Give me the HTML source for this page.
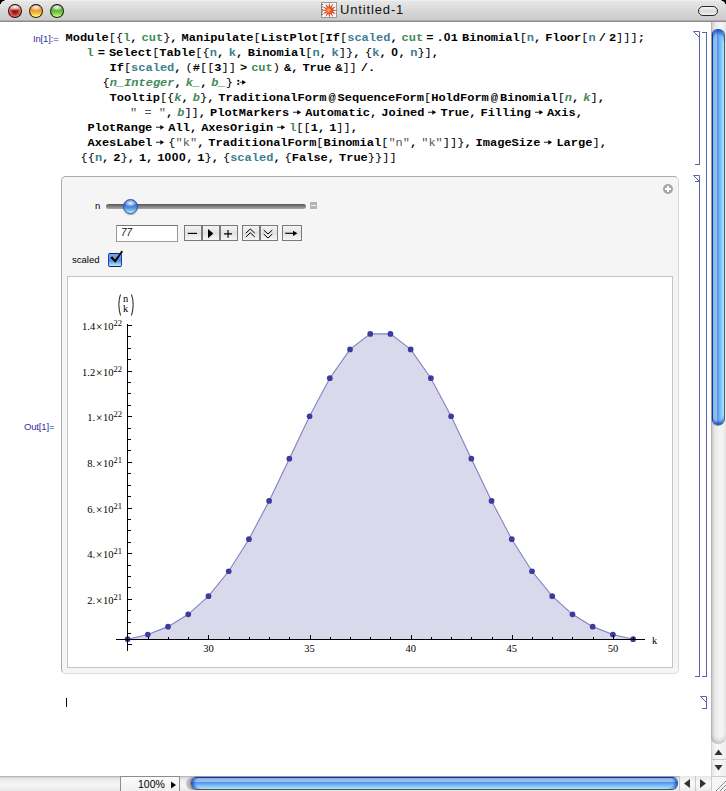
<!DOCTYPE html>
<html><head><meta charset="utf-8">
<style>
*{margin:0;padding:0;box-sizing:border-box}
html,body{width:726px;height:791px;overflow:hidden;background:#fff}
body{position:relative;font-family:"Liberation Sans",sans-serif}
.abs{position:absolute}
#title{left:0;top:0;width:726px;height:22px;background:linear-gradient(#f6f6f6 0,#e7e7e7 1px,#d9d9d9 10px,#cbcbcb 20px,#8c8c8c 21px,#8c8c8c 22px)}
.tl{position:absolute;top:4px;width:14px;height:14px;border-radius:50%}
#ttext{left:340px;top:2px;font-size:13px;letter-spacing:0.85px;color:#111;white-space:nowrap}
.code{position:absolute;white-space:pre;transform:scaleY(0.84);transform-origin:0 10.5px;font-family:"Liberation Mono",monospace;font-weight:bold;font-size:12px;line-height:15px;color:#000}
.b{font-weight:normal}
.g{color:#438958;font-style:normal}
.t{color:#3c7d91;font-style:normal}
.i{font-style:italic;color:#438958}
.z{font-style:normal;line-height:0;font-family:"Liberation Sans",sans-serif;font-size:12px;letter-spacing:0.53px}
.s{color:#555;font-weight:normal;font-style:normal}
.lbl{position:absolute;font-size:9.5px;color:#3030a0;white-space:nowrap;letter-spacing:-0.15px}
.br{position:absolute;background:#5a64a8}
.ar{vertical-align:0.7px}
u{display:inline-block;text-decoration:none}

#title{border-radius:0}
#panel{left:61px;top:176px;width:618px;height:498px;background:#f5f5f5;border:1px solid #ababab;border-right-color:#d9d9d9;border-bottom-color:#dcdcdc;border-radius:5px}
#frame{left:67px;top:276px;width:606px;height:392px;background:#fff;border:1px solid #c4c4c4}
#track{left:106px;top:204px;width:200px;height:5px;border-radius:3px;background:linear-gradient(#555 0,#8a8a8a 60%,#a8a8a8 100%)}
#knob{left:123px;top:199px;width:15px;height:15px;border-radius:50%;border:1px solid #2a4aa8;background:radial-gradient(ellipse 45% 28% at 50% 25%,rgba(255,255,255,.95) 0,rgba(255,255,255,.3) 70%,rgba(255,255,255,0) 100%),linear-gradient(#4a88e0 0,#3a78d8 45%,#6ab0f0 75%,#c8f8ff 100%);box-shadow:0 1px 1px rgba(0,0,0,.35)}
#minbox{left:310px;top:202px;width:7px;height:7px;background:#b4b4b4}
#minbox:after{content:"";position:absolute;left:1px;top:3px;width:5px;height:1px;background:#eee}
#field{left:116px;top:225px;width:62px;height:17px;background:#fff;border:1px solid #9a9a9a;border-top-color:#777;font-size:10px;font-style:italic;padding:1px 0 0 4px;color:#111}
.btn{top:225px;height:16px;border:1px solid #7a7a7a;background:linear-gradient(#f4f4f4,#e2e2e2 50%,#f6f6f6);padding:1px 0 0 0}
.btn svg{display:block}
#cbox{left:108px;top:253px;width:14px;height:14px;border-radius:2px;border:1px solid #1a40c0;border-top-color:#0a1a88;border-bottom-color:#142060;background:linear-gradient(#7aa8e8 0,#5a94e0 40%,#4a88dc 50%,#80c4f8 80%,#b8f0ff 100%)}
#plus{left:663px;top:184px;width:10px;height:10px;margin-top:-4px}
.serif{font-family:"Liberation Serif",serif;font-size:10.5px;color:#000;white-space:nowrap;line-height:1}
.ylab{position:absolute;left:60px;width:62px;text-align:right;font-family:"Liberation Serif",serif;font-size:10.5px;line-height:15px;white-space:nowrap;color:#000}
.ylab sup{font-size:8.5px;vertical-align:4px;line-height:0}
.tx{font-size:12px;margin:0 0.5px;line-height:0;vertical-align:-1px}
.xlab{position:absolute;top:643.5px;width:30px;text-align:center;font-family:"Liberation Serif",serif;font-size:10.5px;line-height:10px;color:#000}
#vbg{left:711px;top:22px;width:15px;height:754px;background:linear-gradient(90deg,#bdbdbd 0,#e6e6e6 1px,#f8f8f8 6px,#efefef 15px)}
#vtrack{left:711px;top:22px;width:15px;height:722px;border-radius:0 0 7px 7px;background:linear-gradient(90deg,#a9a9a9 0,#d0d0d0 1px,#e8e8e8 4px,#f4f4f4 9px,#f0f0f0 15px);box-shadow:inset 0 -4px 4px -1px rgba(0,0,0,.18)}
#vthumb{left:712px;top:28.5px;width:12px;height:396.5px;border-radius:6px;background:linear-gradient(90deg,#0038c0 0,#0038c0 1px,#8cb4e6 1px,#9cc2ea 5px,#4a8ae0 5px,#5aa0f0 6px,#a8e8ff 12px);box-shadow:1px 0 0 #5a5a5a,-1px 0 0 rgba(150,140,130,.7),0 1px 0 rgba(90,80,70,.6)}

#vup{left:711px;top:744px;width:15px;height:16px;border-bottom:1px solid #c8c8c8}
#vdown{left:711px;top:760px;width:15px;height:16px}
#vup svg,#vdown svg{display:block}
#hbar{left:0;top:776px;width:711px;height:15px;background:linear-gradient(#c8c8c8 0,#e2e2e2 1px,#efefef 4px,#f5f5f5 9px,#e4e4e4 15px);border-top:1px solid #b9b9b9}
#zoombox{left:120px;top:776px;width:60px;height:15px;background:linear-gradient(#fcfcfc,#f0f0f0);border:1px solid #8d8d8d;border-bottom:none;font-size:10.5px;line-height:14px;padding-left:17px;color:#000}
#vthumb:before{content:"";position:absolute;left:0;top:0;width:12px;height:12px;border-radius:6px 6px 0 0;background:radial-gradient(ellipse 80% 100% at 50% 100%,rgba(40,110,220,0) 45%,rgba(0,50,190,.85) 100%)}
#vthumb:after{content:"";position:absolute;left:0;bottom:0;width:12px;height:10px;border-radius:0 0 6px 6px;background:radial-gradient(ellipse 80% 100% at 50% 0%,rgba(40,110,220,0) 50%,rgba(0,50,190,.85) 100%)}
#hthumb:before{content:"";position:absolute;left:0;top:0;width:10px;height:12px;border-radius:6px 0 0 6px;background:radial-gradient(ellipse 100% 80% at 100% 50%,rgba(40,110,220,0) 50%,rgba(0,50,190,.8) 100%)}
#hthumb:after{content:"";position:absolute;right:0;top:0;width:10px;height:12px;border-radius:0 6px 6px 0;background:radial-gradient(ellipse 100% 80% at 0% 50%,rgba(40,110,220,0) 50%,rgba(0,50,190,.8) 100%)}
#hcres{left:186px;top:777px;width:16px;height:13px;border-radius:7px 0 0 7px;background:linear-gradient(90deg,#c8c8c8,#a8a8a8 40%,#d8d8d8)}
#hthumb{left:191px;top:777px;width:487px;height:12px;border-radius:6px;background:linear-gradient(#0a32b0 0,#0a32b0 1px,#88b2e6 1px,#9ec4ea 5px,#4a88dc 5px,#5a9cf0 6px,#a8e8ff 12px);box-shadow:0 1px 0 #5a5048,0 -1px 0 rgba(150,130,110,.5),-1px 0 1px rgba(0,0,0,.3)}
#hleft{left:679px;top:776px;width:16px;height:15px;border-left:1px solid #c8c8c8;background:linear-gradient(#e8e8e8,#fafafa 50%,#ececec)}
#hright{left:695px;top:776px;width:16px;height:15px;border-left:1px solid #c8c8c8;background:linear-gradient(#e8e8e8,#fafafa 50%,#ececec)}
#hleft svg,#hright svg{display:block}
#grip{left:711px;top:776px;width:15px;height:15px;background:#f6f6f6;border-top:1px solid #ccc;border-left:1px solid #ccc}
#grip svg{display:block}
#pill{left:698px;top:6px;width:20px;height:10px;border-radius:5px;border:1px solid #2a2a2a;background:linear-gradient(#f8f8f8,#d8d8d8 50%,#f0f0f0)}
#ticon{left:320px;top:2px;width:17px;height:16px}
#ticon svg{display:block}
</style></head><body>
<div id="title" class="abs"></div>
<svg class="abs" style="left:0;top:0" width="726" height="5" shape-rendering="crispEdges"><path d="M0 0H4V1H2V2H1V4H0Z" fill="#000"/><path d="M726 0H722V1H724V2H725V4H726Z" fill="#000"/><path d="M4 0H5V1H4ZM2 1H3V2H2ZM1 2H2V3H1Z" fill="#888"/><path d="M721 0H722V1H721ZM723 1H724V2H723ZM724 2H725V3H724Z" fill="#888"/></svg>
<div class="tl" style="left:8px;border:1px solid #2a0a08;border-top-color:#111;background:radial-gradient(ellipse 55% 30% at 50% 18%,rgba(255,255,255,.95) 0,rgba(255,255,255,.5) 60%,rgba(255,255,255,0) 100%),radial-gradient(circle at 50% 52%,#8a0e08 0,#9a1810 22%,#d85a50 55%,#f08a80 78%,#c8403a 100%)"></div>
<div class="tl" style="left:29px;border:1px solid #3a2008;border-top-color:#111;background:radial-gradient(ellipse 55% 30% at 50% 18%,rgba(255,255,255,.95) 0,rgba(255,255,255,.5) 60%,rgba(255,255,255,0) 100%),linear-gradient(#c85a08 0,#e88a18 35%,#f8c040 70%,#ffff90 100%)"></div>
<div class="tl" style="left:50px;border:1px solid #0a2a08;border-top-color:#111;background:radial-gradient(ellipse 55% 30% at 50% 18%,rgba(255,255,255,.95) 0,rgba(255,255,255,.5) 60%,rgba(255,255,255,0) 100%),linear-gradient(#2a7a10 0,#50a828 35%,#88d050 70%,#c8ff98 100%)"></div>
<div id="ttext" class="abs">Untitled-1</div>


<div class="lbl" style="left:33px;top:33px">In[1]:=</div>
<div class="code" style="left:65.50px;top:31px">Module<b class="b">[{</b><i class="g">l</i>,<u style="width:4.00px"></u><i class="g">cut</i><b class="b">}</b>,<u style="width:4.00px"></u>Manipulate<b class="b">[</b>ListPlot<b class="b">[</b>If<b class="b">[</b><i class="t">scaled</i>,<u style="width:4.00px"></u><i class="g">cut</i><u style="width:3.00px"></u>=<u style="width:3.00px"></u>.<i class="z">0</i>1<u style="width:4.00px"></u>Binomial<b class="b">[</b><i class="t">n</i>,<u style="width:4.00px"></u>Floor<b class="b">[</b><i class="t">n</i><u style="width:3.00px"></u>/<u style="width:3.00px"></u>2<b class="b">]]]</b>;</div>
<div class="code" style="left:86.50px;top:46px"><i class="g">l</i><u style="width:4.00px"></u>=<u style="width:4.00px"></u>Select<b class="b">[</b>Table<b class="b">[{</b><i class="t">n</i>,<u style="width:4.60px"></u><i class="t">k</i>,<u style="width:4.60px"></u>Binomial<b class="b">[</b><i class="t">n</i>,<u style="width:4.60px"></u><i class="t">k</i><b class="b">]}</b>,<u style="width:4.60px"></u><b class="b">{</b><i class="t">k</i>,<u style="width:4.60px"></u><i class="z">0</i>,<u style="width:4.60px"></u><i class="t">n</i><b class="b">}]</b>,</div>
<div class="code" style="left:109.50px;top:61px">If<b class="b">[</b><i class="t">scaled</i>,<u style="width:4.00px"></u><b class="b">(</b>#<b class="b">[[</b>3<b class="b">]]</b><u style="width:4.00px"></u>&gt;<u style="width:4.00px"></u><i class="g">cut</i><b class="b">)</b><u style="width:4.00px"></u>&amp;,<u style="width:4.00px"></u>True<u style="width:4.00px"></u>&amp;<b class="b">]]</b><u style="width:4.00px"></u>/.</div>
<div class="code" style="left:102.50px;top:76px"><b class="b">{</b><i class="i">n_Integer</i>,<u style="width:4.00px"></u><i class="i">k_</i>,<u style="width:4.00px"></u><i class="i">b_</i><b class="b">}</b><u style="width:4.00px"></u><svg class="ar" width="10" height="7" viewBox="0 0 10 7"><circle cx="1.3" cy="1.6" r="1.1"/><circle cx="1.3" cy="5.4" r="1.1"/><path d="M2.6 3.5H6.2" stroke="#444" stroke-width="1.3"/><path d="M5.2 0.7L9 3.5L5.2 6.3Z" fill="#000"/></svg></div>
<div class="code" style="left:109.50px;top:91px">Tooltip<b class="b">[{</b><i class="i">k</i>,<u style="width:4.00px"></u><i class="i">b</i><b class="b">}</b>,<u style="width:4.00px"></u>TraditionalForm<u style="width:2.00px"></u>@<u style="width:2.00px"></u>SequenceForm<b class="b">[</b>HoldForm<u style="width:2.00px"></u>@<u style="width:2.00px"></u>Binomial<b class="b">[</b><i class="i">n</i>,<u style="width:4.00px"></u><i class="i">k</i><b class="b">]</b>,</div>
<div class="code" style="left:130.00px;top:106px"><i class="s">"<u style="width:7.2px"></u>=<u style="width:7.2px"></u>"</i>,<u style="width:4.00px"></u><i class="i">b</i><b class="b">]]</b>,<u style="width:4.00px"></u>PlotMarkers<svg class="ar" width="16" height="7" viewBox="0 0 16 7"><path d="M4 3.5H9.5" stroke="#222" stroke-width="1.3"/><path d="M8.3 0.7L12.2 3.5L8.3 6.3Z" fill="#000"/></svg>Automatic,<u style="width:4.00px"></u>Joined<svg class="ar" width="16" height="7" viewBox="0 0 16 7"><path d="M4 3.5H9.5" stroke="#222" stroke-width="1.3"/><path d="M8.3 0.7L12.2 3.5L8.3 6.3Z" fill="#000"/></svg>True,<u style="width:4.00px"></u>Filling<svg class="ar" width="16" height="7" viewBox="0 0 16 7"><path d="M4 3.5H9.5" stroke="#222" stroke-width="1.3"/><path d="M8.3 0.7L12.2 3.5L8.3 6.3Z" fill="#000"/></svg>Axis,</div>
<div class="code" style="left:87.50px;top:121px">PlotRange<svg class="ar" width="16" height="7" viewBox="0 0 16 7"><path d="M4 3.5H9.5" stroke="#222" stroke-width="1.3"/><path d="M8.3 0.7L12.2 3.5L8.3 6.3Z" fill="#000"/></svg>All,<u style="width:4.00px"></u>AxesOrigin<svg class="ar" width="16" height="7" viewBox="0 0 16 7"><path d="M4 3.5H9.5" stroke="#222" stroke-width="1.3"/><path d="M8.3 0.7L12.2 3.5L8.3 6.3Z" fill="#000"/></svg><i class="g">l</i><b class="b">[[</b>1,<u style="width:4.00px"></u>1<b class="b">]]</b>,</div>
<div class="code" style="left:87.50px;top:136px">AxesLabel<svg class="ar" width="16" height="7" viewBox="0 0 16 7"><path d="M4 3.5H9.5" stroke="#222" stroke-width="1.3"/><path d="M8.3 0.7L12.2 3.5L8.3 6.3Z" fill="#000"/></svg><b class="b">{</b><i class="s">"k"</i>,<u style="width:4.00px"></u>TraditionalForm<b class="b">[</b>Binomial<b class="b">[</b><i class="s">"n"</i>,<u style="width:4.00px"></u><i class="s">"k"</i><b class="b">]]}</b>,<u style="width:4.00px"></u>ImageSize<svg class="ar" width="16" height="7" viewBox="0 0 16 7"><path d="M4 3.5H9.5" stroke="#222" stroke-width="1.3"/><path d="M8.3 0.7L12.2 3.5L8.3 6.3Z" fill="#000"/></svg>Large<b class="b">]</b>,</div>
<div class="code" style="left:80.50px;top:151px"><b class="b">{{</b><i class="t">n</i>,<u style="width:4.00px"></u>2<b class="b">}</b>,<u style="width:4.00px"></u>1,<u style="width:4.00px"></u>1<i class="z">000</i>,<u style="width:4.00px"></u>1<b class="b">}</b>,<u style="width:4.00px"></u><b class="b">{</b><i class="t">scaled</i>,<u style="width:4.00px"></u><b class="b">{</b>False,<u style="width:4.00px"></u>True<b class="b">}}]]</b></div>


<div class="lbl" style="left:24px;top:421px">Out[1]=</div>
<!-- panel -->
<div class="abs" id="panel"></div>
<div class="abs" id="frame"></div>
<div class="abs" style="left:95px;top:200px;font-size:9.5px;color:#000">n</div>
<div class="abs" id="track"></div>
<div class="abs" id="knob"></div>
<div class="abs" id="minbox"></div>
<div class="abs" id="field">77</div>
<div class="abs btn" style="left:184px;width:18px"><svg width="16" height="14"><path d="M2.8 6.4H12" stroke="#000" stroke-width="1.15"/></svg></div>
<div class="abs btn" style="left:202px;width:18px"><svg width="16" height="14"><path d="M5 2L10.4 6.6L5 11.2Z" fill="#000"/></svg></div>
<div class="abs btn" style="left:220px;width:18px"><svg width="16" height="14"><path d="M3.1 6.8H11M7.05 2.9V10.7" stroke="#000" stroke-width="1.15"/></svg></div>
<div class="abs btn" style="left:242px;width:18px"><svg width="16" height="14"><path d="M2.8 6.2L7.3 2L11.8 6.2M2.8 10L7.3 5.8L11.8 10" stroke="#000" stroke-width="1" fill="none"/></svg></div>
<div class="abs btn" style="left:260px;width:18px"><svg width="16" height="14"><path d="M2.7 3L7 7L11.3 3M2.7 7L7 11L11.3 7" stroke="#000" stroke-width="1" fill="none"/></svg></div>
<div class="abs btn" style="left:282px;width:20px"><svg width="18" height="14"><path d="M2.2 6.3H11" stroke="#000" stroke-width="1.15"/><path d="M10 3.7L14.4 6.3L10 8.9Z" fill="#000"/></svg></div>
<div class="abs" style="left:72px;top:254px;font-size:9.5px;color:#000">scaled</div>
<div class="abs" id="cbox"></div>
<svg class="abs" style="left:108px;top:249px" width="18" height="16"><path d="M1.9 8.6L4.3 6.9L6.9 10.3L13.5 1.4L15.2 2.7L7.3 14.2Z" fill="#000" stroke="rgba(255,255,255,.6)" stroke-width="0.5"/></svg>
<div class="abs" id="plus"><svg width="10" height="10"><circle cx="5" cy="5" r="5" fill="#a6a6a6"/><path d="M5 2V8M2 5H8" stroke="#fff" stroke-width="2"/></svg></div>
<svg class="abs" style="left:0;top:0" width="726" height="791" viewBox="0 0 726 791">
<path d="M127.60 639.50 L127.60 639.20 L147.82 634.49 L168.04 626.63 L188.26 614.31 L208.48 596.19 L228.70 571.26 L248.92 539.22 L269.14 500.94 L289.36 458.71 L309.58 416.25 L329.80 378.21 L350.02 349.42 L370.24 333.89 L390.46 333.89 L410.68 349.42 L430.90 378.21 L451.12 416.25 L471.34 458.71 L491.56 500.94 L511.78 539.22 L532.00 571.26 L552.22 596.19 L572.44 614.31 L592.66 626.63 L612.88 634.49 L633.10 639.20 L633.10 639.50 Z" fill="#d9d9eb"/>
<path d="M127.60 639.20 L147.82 634.49 L168.04 626.63 L188.26 614.31 L208.48 596.19 L228.70 571.26 L248.92 539.22 L269.14 500.94 L289.36 458.71 L309.58 416.25 L329.80 378.21 L350.02 349.42 L370.24 333.89 L390.46 333.89 L410.68 349.42 L430.90 378.21 L451.12 416.25 L471.34 458.71 L491.56 500.94 L511.78 539.22 L532.00 571.26 L552.22 596.19 L572.44 614.31 L592.66 626.63 L612.88 634.49 L633.10 639.20" fill="none" stroke="#8080c6" stroke-width="1.1"/>
<circle cx="127.60" cy="639.20" r="2.85" fill="#3c3ca0"/>
<circle cx="147.82" cy="634.49" r="2.85" fill="#3c3ca0"/>
<circle cx="168.04" cy="626.63" r="2.85" fill="#3c3ca0"/>
<circle cx="188.26" cy="614.31" r="2.85" fill="#3c3ca0"/>
<circle cx="208.48" cy="596.19" r="2.85" fill="#3c3ca0"/>
<circle cx="228.70" cy="571.26" r="2.85" fill="#3c3ca0"/>
<circle cx="248.92" cy="539.22" r="2.85" fill="#3c3ca0"/>
<circle cx="269.14" cy="500.94" r="2.85" fill="#3c3ca0"/>
<circle cx="289.36" cy="458.71" r="2.85" fill="#3c3ca0"/>
<circle cx="309.58" cy="416.25" r="2.85" fill="#3c3ca0"/>
<circle cx="329.80" cy="378.21" r="2.85" fill="#3c3ca0"/>
<circle cx="350.02" cy="349.42" r="2.85" fill="#3c3ca0"/>
<circle cx="370.24" cy="333.89" r="2.85" fill="#3c3ca0"/>
<circle cx="390.46" cy="333.89" r="2.85" fill="#3c3ca0"/>
<circle cx="410.68" cy="349.42" r="2.85" fill="#3c3ca0"/>
<circle cx="430.90" cy="378.21" r="2.85" fill="#3c3ca0"/>
<circle cx="451.12" cy="416.25" r="2.85" fill="#3c3ca0"/>
<circle cx="471.34" cy="458.71" r="2.85" fill="#3c3ca0"/>
<circle cx="491.56" cy="500.94" r="2.85" fill="#3c3ca0"/>
<circle cx="511.78" cy="539.22" r="2.85" fill="#3c3ca0"/>
<circle cx="532.00" cy="571.26" r="2.85" fill="#3c3ca0"/>
<circle cx="552.22" cy="596.19" r="2.85" fill="#3c3ca0"/>
<circle cx="572.44" cy="614.31" r="2.85" fill="#3c3ca0"/>
<circle cx="592.66" cy="626.63" r="2.85" fill="#3c3ca0"/>
<circle cx="612.88" cy="634.49" r="2.85" fill="#3c3ca0"/>
<circle cx="633.10" cy="639.20" r="2.85" fill="#3c3ca0"/>
<g shape-rendering="crispEdges" stroke="#000" stroke-width="1">
<line x1="116" y1="639.5" x2="645" y2="639.5"/>
<line x1="127.5" y1="324" x2="127.5" y2="651"/>
<line x1="127.5" y1="644.5" x2="132.0" y2="644.5"/>
<line x1="127.5" y1="633.5" x2="130.5" y2="633.5"/>
<line x1="127.5" y1="622.5" x2="130.5" y2="622.5"/>
<line x1="127.5" y1="610.5" x2="130.5" y2="610.5"/>
<line x1="127.5" y1="599.5" x2="132.0" y2="599.5"/>
<line x1="127.5" y1="587.5" x2="130.5" y2="587.5"/>
<line x1="127.5" y1="576.5" x2="130.5" y2="576.5"/>
<line x1="127.5" y1="565.5" x2="130.5" y2="565.5"/>
<line x1="127.5" y1="553.5" x2="132.0" y2="553.5"/>
<line x1="127.5" y1="542.5" x2="130.5" y2="542.5"/>
<line x1="127.5" y1="530.5" x2="130.5" y2="530.5"/>
<line x1="127.5" y1="519.5" x2="130.5" y2="519.5"/>
<line x1="127.5" y1="508.5" x2="132.0" y2="508.5"/>
<line x1="127.5" y1="496.5" x2="130.5" y2="496.5"/>
<line x1="127.5" y1="485.5" x2="130.5" y2="485.5"/>
<line x1="127.5" y1="473.5" x2="130.5" y2="473.5"/>
<line x1="127.5" y1="462.5" x2="132.0" y2="462.5"/>
<line x1="127.5" y1="450.5" x2="130.5" y2="450.5"/>
<line x1="127.5" y1="439.5" x2="130.5" y2="439.5"/>
<line x1="127.5" y1="428.5" x2="130.5" y2="428.5"/>
<line x1="127.5" y1="416.5" x2="132.0" y2="416.5"/>
<line x1="127.5" y1="405.5" x2="130.5" y2="405.5"/>
<line x1="127.5" y1="393.5" x2="130.5" y2="393.5"/>
<line x1="127.5" y1="382.5" x2="130.5" y2="382.5"/>
<line x1="127.5" y1="371.5" x2="132.0" y2="371.5"/>
<line x1="127.5" y1="359.5" x2="130.5" y2="359.5"/>
<line x1="127.5" y1="348.5" x2="130.5" y2="348.5"/>
<line x1="127.5" y1="336.5" x2="130.5" y2="336.5"/>
<line x1="127.5" y1="325.5" x2="132.0" y2="325.5"/>
<line x1="148.5" y1="639" x2="148.5" y2="636.5"/>
<line x1="168.5" y1="639" x2="168.5" y2="636.5"/>
<line x1="188.5" y1="639" x2="188.5" y2="636.5"/>
<line x1="208.5" y1="639" x2="208.5" y2="634.5"/>
<line x1="229.5" y1="639" x2="229.5" y2="636.5"/>
<line x1="249.5" y1="639" x2="249.5" y2="636.5"/>
<line x1="269.5" y1="639" x2="269.5" y2="636.5"/>
<line x1="289.5" y1="639" x2="289.5" y2="636.5"/>
<line x1="310.5" y1="639" x2="310.5" y2="634.5"/>
<line x1="330.5" y1="639" x2="330.5" y2="636.5"/>
<line x1="350.5" y1="639" x2="350.5" y2="636.5"/>
<line x1="370.5" y1="639" x2="370.5" y2="636.5"/>
<line x1="390.5" y1="639" x2="390.5" y2="636.5"/>
<line x1="411.5" y1="639" x2="411.5" y2="634.5"/>
<line x1="431.5" y1="639" x2="431.5" y2="636.5"/>
<line x1="451.5" y1="639" x2="451.5" y2="636.5"/>
<line x1="471.5" y1="639" x2="471.5" y2="636.5"/>
<line x1="492.5" y1="639" x2="492.5" y2="636.5"/>
<line x1="512.5" y1="639" x2="512.5" y2="634.5"/>
<line x1="532.5" y1="639" x2="532.5" y2="636.5"/>
<line x1="552.5" y1="639" x2="552.5" y2="636.5"/>
<line x1="572.5" y1="639" x2="572.5" y2="636.5"/>
<line x1="593.5" y1="639" x2="593.5" y2="636.5"/>
<line x1="613.5" y1="639" x2="613.5" y2="634.5"/>
<line x1="633.5" y1="639" x2="633.5" y2="636.5"/>
</g>
</svg>
<div class="abs" style="left:116px;top:292px;width:20px;height:26px">
 <svg width="20" height="26"><path d="M4.5 2.5Q1.2 12 4.5 23.5" stroke="#000" stroke-width="0.9" fill="none"/><path d="M15.5 2.5Q18.8 12 15.5 23.5" stroke="#000" stroke-width="0.9" fill="none"/></svg>
 <div class="abs serif" style="left:7px;top:1.5px">n</div><div class="abs serif" style="left:7px;top:11.5px">k</div>
</div>
<div class="abs serif" style="left:652px;top:636px">k</div>
<div class="ylab" style="top:318.9px">1.4<span class="tx">×</span>10<sup>22</sup></div>
<div class="ylab" style="top:364.6px">1.2<span class="tx">×</span>10<sup>22</sup></div>
<div class="ylab" style="top:410.2px">1.<span class="tx">×</span>10<sup>22</sup></div>
<div class="ylab" style="top:455.9px">8.<span class="tx">×</span>10<sup>21</sup></div>
<div class="ylab" style="top:501.6px">6.<span class="tx">×</span>10<sup>21</sup></div>
<div class="ylab" style="top:547.2px">4.<span class="tx">×</span>10<sup>21</sup></div>
<div class="ylab" style="top:592.9px">2.<span class="tx">×</span>10<sup>21</sup></div>
<div class="xlab" style="left:193.5px">30</div>
<div class="xlab" style="left:294.6px">35</div>
<div class="xlab" style="left:395.7px">40</div>
<div class="xlab" style="left:496.8px">45</div>
<div class="xlab" style="left:597.9px">50</div>
<div class="abs" style="left:66px;top:698px;width:1px;height:9px;background:#000"></div>
<!-- brackets -->
<div class="br" style="left:699px;top:32px;width:1px;height:133px"></div>
<div class="br" style="left:695px;top:164px;width:5px;height:1px"></div>
<svg class="abs" style="left:693px;top:31px" width="8" height="8"><path d="M0.5 0.5H6.5V6.5Z" fill="none" stroke="#5a64a8" stroke-width="1"/></svg>
<div class="br" style="left:706px;top:32px;width:1px;height:645px"></div>
<div class="br" style="left:702px;top:32px;width:5px;height:1px"></div>
<div class="br" style="left:702px;top:676px;width:5px;height:1px"></div>
<div class="br" style="left:699px;top:176px;width:1px;height:501px"></div>
<div class="br" style="left:695px;top:676px;width:5px;height:1px"></div>
<svg class="abs" style="left:693px;top:175px" width="8" height="8"><path d="M0.5 0.5H6.5V6.5Z" fill="none" stroke="#5a64a8" stroke-width="1"/></svg>
<div class="br" style="left:695px;top:181px;width:5px;height:1px"></div>
<div class="br" style="left:706px;top:697px;width:1px;height:12px"></div>
<div class="br" style="left:702px;top:708px;width:5px;height:1px"></div>
<svg class="abs" style="left:700px;top:696px" width="8" height="8"><path d="M0.5 0.5H6.5V6.5Z" fill="none" stroke="#5a64a8" stroke-width="1"/></svg>
<!-- vertical scrollbar -->
<div class="abs" id="vbg"></div>
<div class="abs" id="vtrack"></div>
<div class="abs" id="vthumb"></div>
<div class="abs" id="vup"><svg width="15" height="16"><path d="M3.5 11L7.5 5.5L11.5 11Z" fill="#333"/></svg></div>
<div class="abs" id="vdown"><svg width="15" height="16"><path d="M3.5 5L7.5 10.5L11.5 5Z" fill="#333"/></svg></div>
<!-- horizontal bar -->
<div class="abs" id="hbar"></div>
<div class="abs" id="zoombox">100%<svg class="abs" style="left:49px;top:4px" width="8" height="8"><path d="M1 0.5L6 4L1 7.5Z" fill="#000"/></svg></div>
<div class="abs" id="hcres"></div>
<div class="abs" id="hthumb"></div>
<div class="abs" id="hleft"><svg width="16" height="15"><path d="M10 3L4 7.5L10 12Z" fill="#333"/></svg></div>
<div class="abs" id="hright"><svg width="16" height="15"><path d="M4 3L10 7.5L4 12Z" fill="#333"/></svg></div>
<div class="abs" id="grip"><svg width="15" height="15"><path d="M4 14L14 4M8 14L14 8M12 14L14 12" stroke="#888" stroke-width="1"/></svg></div>
<!-- title bar -->
<div class="abs" id="pill"></div>
<div class="abs" id="ticon"><svg width="17" height="16"><rect x="1.5" y="0.5" width="15" height="15" fill="#f4f6f6" stroke="#9a9a9a"/><path d="M1 2.5H3M1 5H3M1 7.5H3M1 10H3M1 12.5H3" stroke="#666" stroke-width="1"/><defs><radialGradient id="sg" cx="0.45" cy="0.5" r="0.5"><stop offset="0" stop-color="#ffc070"/><stop offset="0.4" stop-color="#e85020"/><stop offset="1" stop-color="#c01008"/></radialGradient></defs><path d="M9.30 0.70L10.15 5.11L13.10 1.72L11.63 5.97L15.88 4.50L12.49 7.45L16.90 8.30L12.49 9.15L15.88 12.10L11.63 10.63L13.10 14.88L10.15 11.49L9.30 15.90L8.45 11.49L5.50 14.88L6.97 10.63L2.72 12.10L6.11 9.15L1.70 8.30L6.11 7.45L2.72 4.50L6.97 5.97L5.50 1.72L8.45 5.11Z" fill="url(#sg)"/></svg></div>
</body></html>
